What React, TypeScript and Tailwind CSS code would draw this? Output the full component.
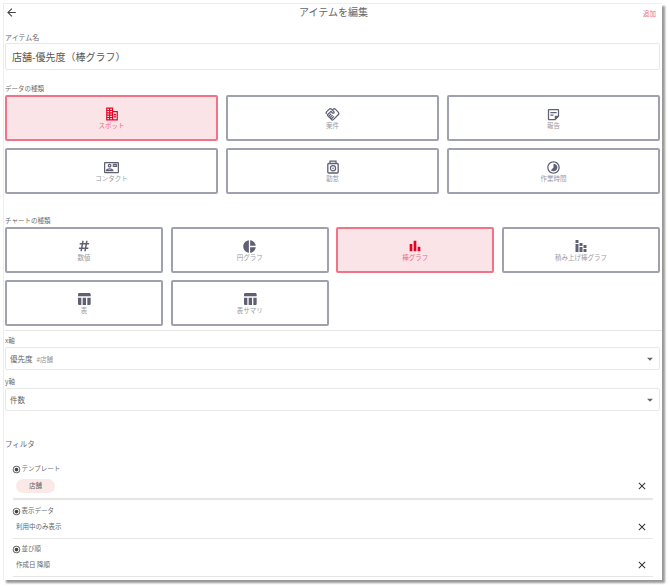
import { MdArrowBack, MdArrowDropDown, MdClose, MdOutlineHandshake, MdOutlineStickyNote2, MdOutlineContactMail, MdOutlineTimelapse, MdPieChart, MdBarChart, MdRadioButtonChecked, MdTableChart } from "react-icons/md";
import { FaHashtag } from "react-icons/fa";
import type { ReactNode } from "react";

const DARK = "#5f6073";

function SpotIcon() {
  return (
    <svg width="14" height="14" viewBox="0 0 24 24" fill="#e60023">
      <path d="M2 1h12v6h8v16H2V1zm2 2v2h3V3H4zm5 0v2h3V3H9zM4 7v2h3V7H4zm5 0v2h3V7H9zm-5 4v2h3v-2H4zm5 0v2h3v-2H9zm-5 4v2h3v-2H4zm5 0v2h3v-2H9zm-5 4v2h3v-2H4zm5 0v2h3v-2H9zm5-10v12h6V9h-6zm1 3h4v2h-4v-2zm0 4h4v2h-4v-2z" />
    </svg>
  );
}

function AttendanceIcon() {
  return (
    <svg width="14" height="14" viewBox="0 0 14 14" fill="none" stroke={DARK}>
      <path d="M4 3.5V1.2h6v2.3" strokeWidth="1.2" />
      <rect x="1.8" y="3.5" width="10.4" height="9.5" rx="1" strokeWidth="1.3" />
      <circle cx="7" cy="8.3" r="2.6" strokeWidth="1.2" />
      <circle cx="7" cy="8.3" r="0.8" fill={DARK} stroke="none" />
    </svg>
  );
}

function StackedIcon() {
  return (
    <svg width="14" height="14" viewBox="0 0 14 14" fill={DARK}>
      <rect x="1.5" y="1" width="3" height="3" />
      <rect x="1.5" y="5" width="3" height="8" />
      <rect x="5.5" y="4" width="3" height="3" />
      <rect x="5.5" y="8" width="3" height="5" />
      <rect x="9.5" y="6" width="3" height="3" />
      <rect x="9.5" y="10" width="3" height="3" />
    </svg>
  );
}

function TypeButton({ icon, label, active }: { icon: ReactNode; label: string; active?: boolean }) {
  return (
    <div
      className={`h-[46px] rounded-[2px] border-2 flex flex-col items-center justify-center ${
        active ? "bg-[#fbe4e8] border-[#f27385] text-[#f06b80]" : "bg-white border-[#a0a1ae] text-[#9a9aa3]"
      }`}
    >
      <div className="h-[14px] flex items-center justify-center">{icon}</div>
      <div className="text-[6.5px] leading-[8px]">{label}</div>
    </div>
  );
}

function FieldLabel({ children }: { children: ReactNode }) {
  return <div className="text-[6.5px] leading-[10px] text-[#6b6b6b]">{children}</div>;
}

function SelectBox({ children }: { children: ReactNode }) {
  return (
    <div className="h-[23px] mt-[2px] mr-[2px] rounded-[2px] border border-[#e8e8e8] flex items-center pl-[4px] pr-[2px]">
      <div className="flex-1 flex items-baseline gap-[4px] text-[7.5px] text-[#666]">{children}</div>
      <MdArrowDropDown size={14} color="#666" />
    </div>
  );
}

function FilterRow({ title, children, first }: { title: string; children: ReactNode; first?: boolean }) {
  return (
    <div className={`ml-[8px] mr-[9px] pb-[2px] border-[#e6e6e6] ${first ? "border-b-2" : "border-b"}`}>
      <div className="flex items-center gap-[1px] h-[14px] -ml-[1.5px] text-[6.5px] text-[#6b6b6b]">
        <MdRadioButtonChecked size={9} color="#444" />
        {title}
      </div>
      <div className={`flex items-center justify-between pl-[3px] pr-[5px] ${first ? "h-[20px]" : "h-[18px]"}`}>
        <div className="text-[6.5px] text-[#666]">{children}</div>
        <MdClose size={12} color="#333" />
      </div>
    </div>
  );
}

export default function App() {
  const icon = { size: 15, color: DARK };
  return (
    <div className="w-[670px] h-[587px] bg-white pt-[3px] pl-[3px] font-['Noto_Sans_CJK_JP','Noto_Sans',sans-serif]">
      <div className="w-[659px] h-[577px] bg-white border-l border-t border-[#eee] shadow-[3px_3px_2px_#999] overflow-hidden pl-[1px]">
        <div className="relative h-[24px] flex items-start justify-between pr-[6px] pt-[2px]">
          <MdArrowBack size={13} color="#444" />
          <div className="absolute left-0 right-0 top-0 text-center text-[10px] leading-[15px] text-[#666]">アイテムを編集</div>
          <div className="text-[6.5px] text-[#f06b80] pt-[3px]">追加</div>
        </div>
        <div className="pt-[4px] text-[7px] leading-[10px] text-[#6b6b6b]">アイテム名</div>
        <div className="h-[27px] mt-[1px] mr-[2px] rounded-[2px] border border-[#e8e8e8] flex items-center pl-[6px] text-[10px] text-[#555]">
          店舗-優先度（棒グラフ）
        </div>
        <div className="mt-[13px]">
          <FieldLabel>データの種類</FieldLabel>
        </div>
        <div className="grid grid-cols-3 gap-x-[8px] gap-y-[7px] mr-[2px] mt-[2px]">
          <TypeButton active icon={<SpotIcon />} label="スポット" />
          <TypeButton icon={<MdOutlineHandshake {...icon} />} label="案件" />
          <TypeButton icon={<MdOutlineStickyNote2 {...icon} />} label="報告" />
          <TypeButton icon={<MdOutlineContactMail {...icon} />} label="コンタクト" />
          <TypeButton icon={<AttendanceIcon />} label="勤怠" />
          <TypeButton icon={<MdOutlineTimelapse {...icon} />} label="作業時間" />
        </div>
        <div className="mt-[21px]">
          <FieldLabel>チャートの種類</FieldLabel>
        </div>
        <div className="grid grid-cols-4 gap-x-[7.5px] gap-y-[7px] mr-[2px] mt-[2px]">
          <TypeButton icon={<FaHashtag size={12} color={DARK} />} label="数値" />
          <TypeButton icon={<MdPieChart {...icon} />} label="円グラフ" />
          <TypeButton active icon={<MdBarChart size={16} color="#e60023" />} label="棒グラフ" />
          <TypeButton icon={<StackedIcon />} label="積み上げ棒グラフ" />
          <TypeButton icon={<MdTableChart size={16} color={DARK} />} label="表" />
          <TypeButton icon={<MdTableChart size={16} color={DARK} />} label="表サマリ" />
        </div>
        <div className="border-t border-[#e6e6e6] mt-[4px] pt-[4px]">
          <FieldLabel>x軸</FieldLabel>
        </div>
        <SelectBox>
          優先度<span className="text-[6.5px] text-[#999]">#店舗</span>
        </SelectBox>
        <div className="mt-[6px]">
          <FieldLabel>y軸</FieldLabel>
        </div>
        <SelectBox>件数</SelectBox>
        <div className="text-[7.5px] leading-[12px] text-[#666] mt-[27px]">フィルタ</div>
        <div className="mt-[12px]">
          <FilterRow first title="テンプレート">
            <span className="inline-flex items-center justify-center w-[39px] h-[14px] rounded-full bg-[#fbe9e7] text-[6.5px] text-[#666]">店舗</span>
          </FilterRow>
        </div>
        <div className="mt-[4px]">
          <FilterRow title="表示データ">利用中のみ表示</FilterRow>
        </div>
        <div className="mt-[3px]">
          <FilterRow title="並び順">作成日 降順</FilterRow>
        </div>
      </div>
    </div>
  );
}
